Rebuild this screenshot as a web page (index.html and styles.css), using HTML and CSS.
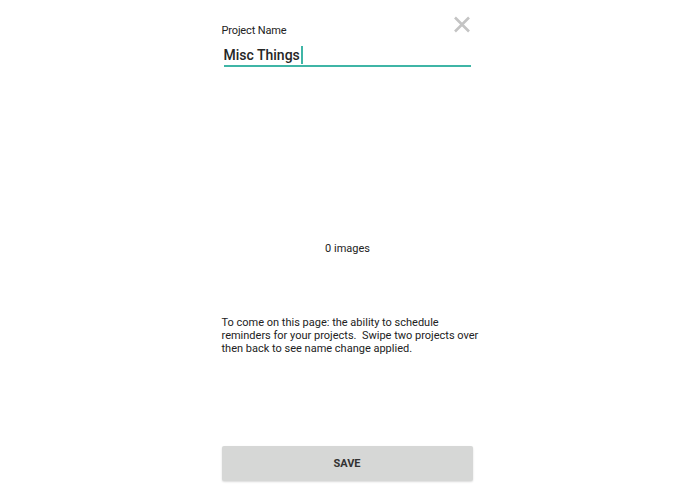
FILE: index.html
```html
<!DOCTYPE html>
<html>
<head>
<meta charset="utf-8">
<link rel="stylesheet" href="styles.css">
</head>
<body>
<div class="screen">
  <div class="header">
    <div class="field">
      <div class="label">Project Name</div>
      <div class="input"><span class="value">Misc Things</span><span class="caret"></span></div>
    </div>
    <button class="close" aria-label="Close">
      <svg width="18" height="17" viewBox="0 0 18 17"><path d="M2 1.5 L16 15.5 M16 1.5 L2 15.5" stroke="#c4c4c4" stroke-width="2.6" stroke-linecap="butt" fill="none"/></svg>
    </button>
  </div>
  <div class="images">0 images</div>
  <p class="note">To come on this page: the ability to schedule reminders for your projects.&nbsp; Swipe two projects over then back to see name change applied.</p>
  <div class="spacer"></div>
  <button class="save">SAVE</button>
</div>
</body>
</html>
```
FILE: styles.css
```css
html, body {
  margin: 0;
  padding: 0;
  background: #ffffff;
}
body {
  font-family: Roboto, "Liberation Sans", Arial, sans-serif;
  color: #212121;
}
.screen {
  width: 252px;
  margin: 0 auto;
  height: 494px;
  display: flex;
  flex-direction: column;
  box-sizing: border-box;
}
.header {
  display: flex;
  align-items: flex-start;
  justify-content: space-between;
  padding-top: 16px;
}
.field {
  flex: 1;
  padding-top: 8px;
}
.label {
  font-size: 11px;
  line-height: 14px;
  color: #222;
  letter-spacing: -0.15px;
}
.input {
  margin-top: 7px;
  margin-left: 2px;
  height: 20px;
  border-bottom: 2px solid #3fb5a6;
  display: flex;
  align-items: center;
  width: 247px;
}
.value {
  font-size: 14px;
  line-height: 20px;
  font-weight: 500;
  color: #262626;
}
.caret {
  width: 2px;
  height: 18px;
  background: #3fb5a6;
  margin-left: 1px;
}
.close {
  background: none;
  border: 0;
  padding: 0;
  margin: 0 3px 0 -18px;
  width: 18px;
  height: 17px;
  position: relative;
}
.close svg { display: block; }
.images {
  margin-top: 175px;
  text-align: center;
  font-size: 11px;
  line-height: 14px;
  color: #222;
}
.note {
  margin: 60px 0 0 0;
  font-size: 11px;
  line-height: 13px;
  color: #222;
  width: 258px;
}
.spacer { flex: 1; }
.save {
  margin: 0 0 13px 0;
  width: 251px;
  height: 35px;
  background: #d6d7d6;
  border: 0;
  border-radius: 2px;
  box-shadow: 0 1px 2px rgba(0,0,0,0.15);
  font-family: Roboto, "Liberation Sans", Arial, sans-serif;
  font-weight: bold;
  font-size: 11px;
  color: #333;
}
```
